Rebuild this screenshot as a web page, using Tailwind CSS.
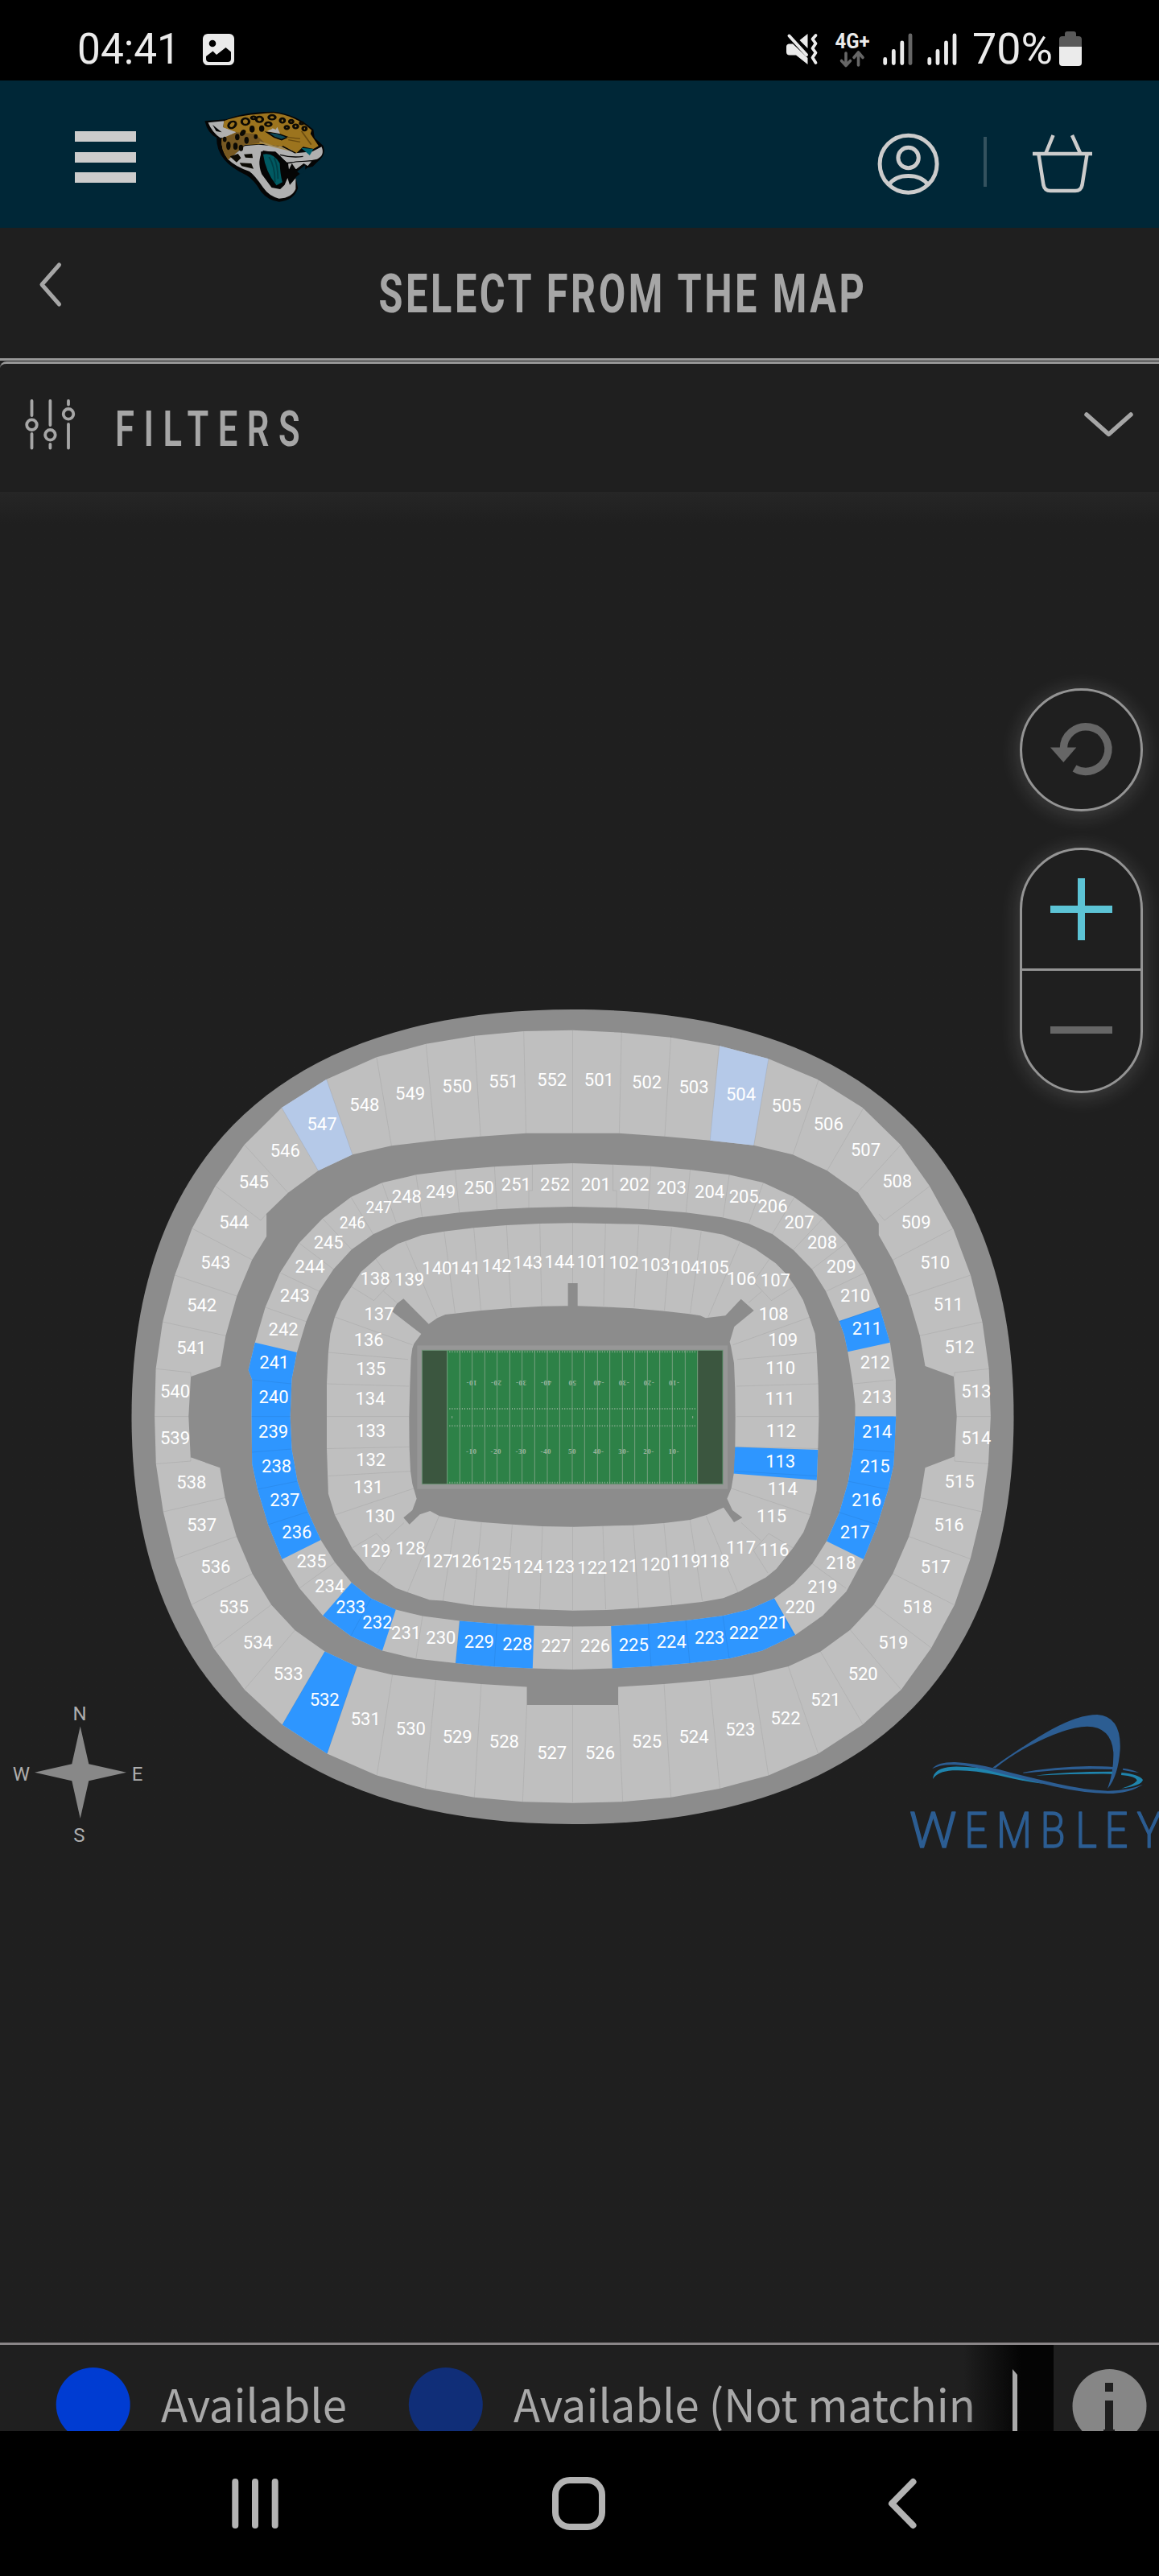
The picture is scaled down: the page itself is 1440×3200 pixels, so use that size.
<!DOCTYPE html>
<html lang="en">
<head>
  <meta charset="UTF-8">
  <title>Select from the map</title>
  <script src="https://cdn.jsdelivr.net/npm/@tailwindcss/browser@4"></script>
</head>
<body class="bg-black">

  <div class="flex h-[3200px] w-[1440px] flex-col overflow-hidden bg-[#1f1f1f] font-['Roboto',sans-serif]">

    <!-- Status bar -->
    <div class="h-[100px] shrink-0 bg-black">
      <svg class="block h-[100px] w-[1440px]" viewBox="0 0 1440 100" fill="#ebebeb">
        <text x="96" y="79" font-size="53.5" textLength="128" lengthAdjust="spacingAndGlyphs">04:41</text>

        <rect x="252" y="42" width="39" height="39" rx="6"/>
        <ellipse cx="264" cy="54" rx="4.3" ry="4.3" fill="#000"/>
        <path d="M256 72V70l8.500-6.500 4.500 4.500 11.500-9 6.500 5.500V73q0 4-4 4H260q-4 0-4-4z" fill="#000"/>

        <path d="M980 54.500h5L1003.500 72V80L989 68.500H981q-4 0-4-4V58q0-3 3-3.500zM993.500 50L1003.500 42V60z"/>
        <path d="M980.500 44.500L1002 68" stroke="#ebebeb" stroke-width="4" stroke-linecap="round"/>
        <path d="M1013.500 44l-4 4.500 4 5.500-4 6 4 5.500-4 6 4 6.500" fill="none" stroke="#ebebeb" stroke-width="3.800" stroke-linecap="round" stroke-linejoin="round"/>

        <text x="1037.500" y="60" font-size="25.500" font-weight="700" textLength="43" lengthAdjust="spacingAndGlyphs">4G+</text>
        <path d="M1051 66V81M1045.500 75.500L1051 81.500l5.500-6M1066.500 81V66M1061 71.500L1066.500 65l5.500 6.500" fill="none" stroke="#666" stroke-width="3.600" stroke-linecap="round" stroke-linejoin="round"/>

        <g stroke="#ebebeb" stroke-width="4.800" stroke-linecap="round">
          <path d="M1099.700 73.500V78.500M1110.300 63.500V78.500M1120.800 53V78.500"/>
          <path d="M1131 44V78.500" stroke="#666"/>
          <path d="M1154.800 73.500V78.500M1165 63.500V78.500M1175.500 53V78.500M1186 44V78.500"/>
        </g>

        <text x="1208" y="79" font-size="53.500" textLength="100" lengthAdjust="spacingAndGlyphs">70%</text>

        <path d="M1323 45v-3q0-3 3-3h8q3 0 3 3v3h3q4 0 4 4v9h-28v-9q0-4 4-4z" fill="#595959"/>
        <path d="M1316 58h28v20q0 4-4 4h-20q-4 0-4-4z"/>
      </svg>
    </div>

    <!-- Site header -->
    <header class="flex h-[183px] shrink-0 items-start bg-[#002737] pl-[93px] pr-[83px]">
      <div class="mt-[63px] flex w-[76px] flex-col gap-[12.500px]">
        <span class="h-[13px] bg-[#ccc]"></span>
        <span class="h-[13px] bg-[#ccc]"></span>
        <span class="h-[13px] bg-[#ccc]"></span>
      </div>

      <svg class="ml-[79px] mt-[33px] h-[123.300px] w-[160.700px]" viewBox="540 400 350 370" preserveAspectRatio="none">
        <path d="M554 452L612 446Q660 418 740 417Q800 425 848 484L851 515L874 543Q884 575 862 600L846 622L832 626L800 662L806 702Q795 748 755 753Q725 748 706 715Q688 672 668 655Q625 628 607 596Q585 560 586 514Q562 500 554 452Z" fill="#050505"/>
        <path d="M563 458L606 452L604 474L640 492L622 514L596 515Q574 495 563 458Z" fill="#b0b0b0"/>
        <path d="M575 466L600 494L585 490Z" fill="#050505"/>
        <path d="M606 452Q650 428 740 422Q800 432 843 486L840 500L862 545L848 556L820 548L800 575L760 548L716 537L662 541L618 598Q596 560 600 518L640 494L604 476Z" fill="#9c741e"/>
        <path d="M600 518L640 494L690 500L715 532L662 541L618 596Q596 558 600 518Z" fill="#765822"/>
        <path d="M618 596L662 545L700 540L760 548L800 572L845 566L870 548Q880 580 858 594L835 600L775 606L748 570L712 562Q694 600 708 650L735 700L758 706L770 690L778 664L784 690L800 665L800 705Q790 738 755 741Q728 732 712 700Q690 655 675 640Q636 622 618 596Z" fill="#b0b0b0"/>
        <path d="M706 566L745 566L776 606L777 655L755 692L737 700Q700 640 706 566Z" fill="#050505"/>
        <path d="M712 576Q740 568 757 610Q758 650 764 680L748 692Q718 640 712 576Z" fill="#005a62"/>
        <path d="M728 586Q744 620 744 680M742 590Q752 620 752 668" stroke="#003f47" stroke-width="4" fill="none"/>
        <path d="M778 610L800 604L846 600L833 622L822 612L800 635L790 614L781 640Z" fill="#b0b0b0" stroke="#050505" stroke-width="3"/>
        <path d="M804 640L826 616L826 640L812 650Z" fill="#002737"/>
        <path d="M815 552L848 556L838 580Z" fill="#00606e"/>
        <path d="M722 494L750 498L778 512L762 522L742 512Z" fill="#0c4856" stroke="#050505" stroke-width="4"/>
        <path d="M722 490L738 480L730 474L746 484L750 474L758 500Z" fill="#b0b0b0"/>
        <path d="M702 530Q740 548 790 562" stroke="#a58a50" stroke-width="6" fill="none"/>
        <path d="M758 578Q790 590 820 584M764 546L800 572" stroke="#050505" stroke-width="4" fill="none"/>
        <path d="M776 512L812 518M780 522L812 530M816 490L842 540" stroke="#6b4c10" stroke-width="4" fill="none"/>
        <g fill="none" stroke="#0c0a04" stroke-width="7">
          <ellipse cx="628" cy="466" rx="9" ry="13" transform="rotate(25 628 466)"/>
          <ellipse cx="664" cy="454" rx="10" ry="12"/>
          <ellipse cx="702" cy="446" rx="9" ry="10"/>
          <ellipse cx="686" cy="440" rx="6" ry="5"/>
          <ellipse cx="736" cy="438" rx="9" ry="8"/>
          <ellipse cx="726" cy="464" rx="8" ry="7"/>
          <ellipse cx="764" cy="450" rx="6" ry="8"/>
          <ellipse cx="788" cy="454" rx="5" ry="6"/>
          <ellipse cx="800" cy="472" rx="6" ry="7"/>
          <ellipse cx="824" cy="480" rx="5" ry="7"/>
          <ellipse cx="776" cy="476" rx="5" ry="6"/>
          <ellipse cx="816" cy="460" rx="4" ry="4"/>
        </g>
        <g fill="#0c0a04">
          <ellipse cx="657" cy="496" rx="7" ry="12" transform="rotate(20 657 496)"/>
          <ellipse cx="682" cy="482" rx="7" ry="13"/>
          <ellipse cx="708" cy="480" rx="7" ry="12"/>
          <ellipse cx="642" cy="512" rx="6" ry="12"/>
          <ellipse cx="667" cy="524" rx="6" ry="13"/>
          <ellipse cx="692" cy="510" rx="5" ry="9"/>
          <ellipse cx="618" cy="544" rx="6" ry="16"/>
          <ellipse cx="637" cy="546" rx="6" ry="13"/>
          <ellipse cx="652" cy="552" rx="6" ry="12"/>
          <ellipse cx="608" cy="520" rx="5" ry="10"/>
          <path d="M622 584L644 574L652 590L640 606ZM660 576L682 574L684 590L664 588ZM648 608L680 610L686 630L654 620Z"/>
        </g>
      </svg>

      <div class="flex-1"></div>

      <svg class="mt-[64px] h-[80px] w-[269px]" viewBox="1088 164 269 80" fill="none" stroke="#ccc" stroke-width="5">
        <circle cx="1128.600" cy="203.700" r="35.500"/>
        <circle cx="1128.600" cy="196" r="12.700"/>
        <path d="M1104.500 229.500Q1112 218.500 1128.600 218.500T1153 229.500"/>
        <path d="M1224 170V232" stroke="#34525e" stroke-width="4"/>
        <path d="M1283 191H1357" stroke-width="4.500"/>
        <path d="M1290.500 192L1296.500 230Q1298 237 1305 237H1336Q1343 237 1344.500 230L1350.500 192" stroke-width="4.500"/>
        <path d="M1308.500 168L1299.500 190M1332 168L1342 190" stroke-width="4.500"/>
      </svg>
    </header>

    <!-- Page title -->
    <div class="flex h-[162px] shrink-0 items-start pl-[48px]">
      <svg class="mt-[40px] h-[60px] w-[30px]" viewBox="48 323 30 60" fill="none" stroke="#a6a6a6" stroke-width="5" stroke-linecap="round" stroke-linejoin="round">
        <path d="M73.500 329L52 353.500L73.500 378"/>
      </svg>
      <svg class="ml-[380px] mt-[17px] h-[120px] w-[660px]" viewBox="458 300 660 120" fill="#a6a6a6">
        <text x="470.500" y="388" font-size="67.500" font-weight="700" letter-spacing="5" textLength="607" lengthAdjust="spacingAndGlyphs">SELECT FROM THE MAP</text>
      </svg>
    </div>
    <div class="h-[3px] shrink-0 bg-[#989898]"></div>

    <!-- Filters -->
    <div class="mt-px flex h-[162px] shrink-0 items-start rounded-tl-[8px] border-t-[3px] border-[#989898] pl-[28px]">
      <svg class="mt-[38px] h-[72px] w-[68px]" viewBox="28 490 68 72" fill="none" stroke="#a6a6a6" stroke-width="3.800" stroke-linecap="round">
        <path d="M39.500 498V516M39.500 539V556.500M62.400 498V528M62.400 552V556.500M85 498V502.500M85 527V556.500"/>
        <circle cx="39.500" cy="527.700" r="6.300"/>
        <circle cx="62.400" cy="540.300" r="6.300"/>
        <circle cx="85" cy="514.300" r="6.300"/>
      </svg>
      <svg class="ml-[34px] mt-[23px] h-[115px] w-[300px]" viewBox="130 475 300 115" fill="#a6a6a6">
        <text x="143" y="554" font-size="60.500" font-weight="600" letter-spacing="16" textLength="241" lengthAdjust="spacingAndGlyphs">FILTERS</text>
      </svg>
      <svg class="ml-[914px] mt-[54px] h-[40px] w-[68px]" viewBox="1344 506 68 40" fill="none" stroke="#a6a6a6" stroke-width="5.500" stroke-linecap="round" stroke-linejoin="round">
        <path d="M1350 515L1377.500 539.500L1405 515"/>
      </svg>
    </div>

    <!-- Seat map -->
    <main class="relative h-[2299px] shrink-0 bg-linear-to-b from-[#262626] to-[#1f1f1f] to-[40px]">
      <svg id="map" class="block h-[2299px] w-[1440px]" viewBox="0 611 1440 2299">
        <path fill="#8c8c8c" d="M163.500 1760C163.500 1431 355.500 1254 711.500 1254S1259.500 1431 1259.500 1760S1067.500 2266 711.500 2266S163.500 2089 163.500 1760Z"/>

        <!-- 500 level -->
        <path fill="#bfbfbf" fill-rule="evenodd" d="M711.500 1279.700L650.700 1281 589.300 1286.700 529.300 1296.700 467.900 1313.300 405.700 1340.700 350 1376 303.600 1422 267.500 1473.300 238.600 1526 217.100 1584.300 202.100 1642 193.600 1700.300 192.100 1759.600 193.800 1818.500 202.800 1878 217.100 1936.600 237.900 1993.400 265.400 2047.500 303.600 2098.800 350.700 2142.500 406.400 2178.400 468.200 2205.600 528.600 2222 589.300 2232.800 649.300 2238.300 711.500 2239.700 772.900 2238.300 833.900 2232.800 893.500 2222 954.900 2205.600 1016.700 2178.400 1071.800 2142.500 1119.900 2098.800 1156.900 2047.500 1186 1993.400 1205.700 1936.600 1219.800 1878 1228 1818.500 1230.900 1759.600 1228.700 1700.300 1220.500 1642 1206 1584.300 1184.600 1527 1155 1473.300 1118.800 1422 1071.800 1376 1015.600 1340.700 954.900 1315.300 894.200 1299.300 833.600 1288.700 772.500 1282.700Z
          M711.500 1407.700L768.800 1407.700 825.800 1411.700 882 1416.700 936.400 1422.700 984.900 1434.300 1027.800 1454.300 1066.300 1481.700 1091.800 1520 1091.800 1534.300 1109.500 1565.700 1128.400 1610.300 1142.800 1659 1149.500 1697 1185 1710 1188.700 1759.600 1186.100 1809.200 1149.500 1823.300 1143.600 1859.800 1129.200 1909 1109.200 1954.900 1085.500 1993.400 1056.600 2024.400 1019.600 2051.600 979.700 2069.900 934.600 2080.600 881.300 2087.100 824.700 2091.900 768.100 2095.400 768.100 2118.100 654.600 2118.100 654.600 2095.400 597.900 2091.900 541.400 2087.100 487.500 2080.600 443.600 2070.200 403.600 2051.600 366.400 2025.100 337.100 1993.400 313.600 1954.900 293.900 1908.700 279.600 1860.500 273.200 1823.300 236.800 1810.200 234.300 1759.600 237.100 1710 273.900 1697.300 280.400 1659.300 294.300 1610 313.200 1565 331.100 1536 331.100 1507.700 357.900 1481.700 395.400 1454.300 437.900 1434.300 486.400 1423.300 540.700 1416.700 597.100 1411.700 653.600 1407.700Z"/>

        <!-- 200 level -->
        <path fill="#bfbfbf" fill-rule="evenodd" d="M711.500 1445L661.400 1446.700 614.300 1449.300 565.400 1453.300 516.800 1459.300 474.600 1469.300 436.100 1487 400.700 1513.700 371.400 1544.300 347.900 1581 329.600 1624 316.800 1667.700 308.600 1702 313.200 1714 312.500 1759.600 313.200 1818.500 320 1850.200 333.200 1894.300 350.400 1937 372.100 1973.100 401.100 2006.900 436.100 2032.400 475 2050.600 516.800 2060.600 566.100 2066.100 614.300 2070.600 661.800 2072.600 711.500 2074 760.700 2072.600 808.800 2069.900 856.900 2066.100 906.400 2060.200 947.100 2050.600 988.200 2031 1021.900 2007.200 1051.500 1976.900 1072.900 1937 1089.900 1895 1103.600 1850.200 1110.300 1819.900 1113.200 1759.600 1112.900 1714 1105.800 1667.700 1092.900 1624 1074.800 1581.700 1051.500 1543.700 1021.900 1512.700 986.300 1486.700 947.900 1469 905.700 1459.300 856.500 1453 808.400 1448.700 760.300 1446.700Z
          M711.500 1499L765.500 1500.300 804.300 1502.300 852.400 1506.300 897.200 1512.300 930.100 1520 960 1533.300 986 1553 1008.900 1576.700 1025.900 1603.700 1042.600 1641 1048.900 1658.300 1053.300 1679.300 1059.600 1718.700 1062.500 1745 1062.500 1759.600 1060.300 1801 1054 1839.900 1043 1878.400 1027 1914.600 1009.300 1942.500 986 1967.300 961.900 1985.500 930.100 1999.600 897.600 2007.200 852.400 2013 804.300 2017.200 759.200 2020 711.500 2020.600 663.600 2019.600 617.500 2017.200 571 2013.400 525 2007.600 491.800 1999.600 461 1985.500 436.800 1965.900 416.100 1940.800 398.600 1912.900 382.500 1877.700 369.600 1839.900 362.500 1800.300 360.700 1759.600 362.500 1713.300 368.900 1680 380.400 1641.700 396.400 1604 414.300 1576.700 436.800 1552.300 463.600 1533.300 492.900 1520 520 1512.500 570.700 1506.300 617.500 1502.300 657 1500.300Z"/>

        <!-- 100 level -->
        <path fill="#bfbfbf" d="M711.500 1519.300L670.700 1520 629.300 1522 588.600 1525.300 551.800 1529.700 524.300 1534.300 494.600 1545 473.200 1558.300 448.600 1580 436.800 1598.300 424.300 1616.700 416 1636 410.400 1656.700 407.900 1680 406 1719.300 406 1799.200 407.900 1855.400 416 1881.900 437.500 1923.200 458.600 1949 492.100 1972.800 533.900 1987.600 550.400 1988.600 588.200 1994.500 629.300 1997.600 670.400 1999.300 711.500 2000.700 753.300 2000 794.700 1997.600 835.800 1994.100 872 1990 898.700 1985.200 919 1976.900 951.600 1959.400 964.500 1949 985.200 1922.900 998.200 1903.600 1006.700 1882.200 1014.500 1851.900 1016.300 1800.600 1017.400 1759.600 1016.700 1720 1014.800 1680 1012.600 1656.700 1005.600 1636 997.800 1615 988.600 1599.300 977.500 1583.300 963.800 1569.300 938.600 1551.700 919 1542 898.700 1533.700 871.300 1528.700 836 1523.700 792.500 1520.700 752.500 1520Z"/>

        <!-- Matching blocks -->
        <g fill="#2e96ff">
          <path d="M316.800 1667.700L368.900 1680 362.500 1713.300 360.700 1759.600 362.500 1800.300 369.600 1839.900 382.500 1877.700 398.600 1912.900 350.400 1937 333.200 1894.300 320 1850.200 313.200 1818.500 312.500 1759.600 313.200 1714 308.600 1702Z"/>
          <path d="M401.100 2006.900L436.800 1965.900 461 1985.500 491.800 1999.600 475 2050.600 436.100 2032.400Z"/>
          <path d="M571 2013.400L617.500 2017.200 663.600 2019.600 661.800 2072.600 614.300 2070.600 566.100 2066.100Z"/>
          <path d="M759.200 2020L804.300 2017.200 852.400 2013 897.600 2007.200 930.100 1999.600 961.900 1985.500 988.200 2031 947.100 2050.600 906.400 2060.200 856.900 2066.100 808.800 2069.900 760.700 2072.600Z"/>
          <path d="M1062.500 1759.600L1113.200 1759.600 1111.400 1801 1110.300 1819.900 1103.600 1850.200 1089.900 1895 1072.900 1937 1027 1914.600 1043 1878.400 1054 1839.900 1060.300 1801Z"/>
          <path d="M1042.600 1641L1092.900 1624 1105.800 1667.700 1053.300 1679.300 1048.900 1658.300Z"/>
          <path d="M913 1797.500L1016.300 1801 1014.800 1838.800 911 1830.600Z"/>
          <path d="M403.600 2051.600L443.600 2070.200 406.400 2178.400 350.700 2142.500Z"/>
        </g>
        <g fill="#b5c9e8">
          <path d="M405.700 1340.700L437.900 1434.300 395.400 1454.300 350 1376Z"/>
          <path d="M894.200 1299.300L954.900 1315.300 936.400 1422.700 882 1416.700Z"/>
        </g>

        <!-- Block edges, left half then mirrored -->
        <g fill="none" stroke="#000" stroke-opacity=".065" stroke-width="1">
          <path id="edges" d="M650.700 1281L653.600 1407.700M589.300 1286.700L597.100 1411.700M529.300 1296.700L540.700 1416.700M467.900 1313.300L486.400 1423.300M405.700 1340.700L437.900 1434.300M350 1376L395.400 1454.300M303.600 1422L357.900 1481.700M267.500 1473.300L324 1516 331 1508M238.600 1526L313.200 1565M217 1584L294.300 1610M202 1642L280.400 1659.300M193.600 1700.300L237 1705V1710M192 1759.600H234.300M193.800 1818.500L237 1815V1810M202.800 1878L279.600 1860.500M217.100 1936.600L293.900 1908.700M237.900 1993.400L313.600 1954.900M265.400 2047.500L337.100 1993.400M303.600 2098.800L366.400 2025.100M350.700 2142.500L403.600 2051.600M406.400 2178.400L443.600 2070.200M468.200 2205.600L487.500 2080.600M528.600 2222L541.400 2087.100M589.300 2232.800L597.900 2091.900M649.300 2238.300L654.600 2118
            M661.400 1446.700V1479H657V1500M614.300 1449L617.500 1502M565.400 1453L570.700 1506M516.800 1459L524.600 1511.700M474.600 1469L492 1518M436 1487L463.600 1533M400.700 1513.700L436.800 1552M371.400 1544L414.300 1576.700M347.900 1581L396.400 1604M329.600 1624L380.400 1641.700M313 1714L362 1719M312.500 1759.600H361M313 1804L362.500 1800M320 1850L369.600 1840M333 1894L382.500 1878M372 1973L416 1941M436 2032L461 1985.500M516.800 2060.600L525 2007.600M566 2066L571 2013.400M614 2070.600L617.500 2017
            M670.700 1520L673 1622M629.300 1522L635 1624M588.600 1525L597.500 1627.700M551.800 1529.700L565.400 1631M503.900 1543L542.900 1635.700M467 1564L486.800 1592 464.600 1615.600 437 1598.600M476.400 1604L493 1618.300M416 1636L512.500 1670.700M407.900 1680L507 1688.700M406 1719L508 1722M406 1759.600H508M406 1799.500L508 1797.500M407.900 1833.500L510 1827.600M416 1881.900L514 1849M437.500 1923L467.900 1905 486.800 1926 469 1954M477.500 1914L502 1891.500M545.700 1882.900L506.400 1977.600M565.700 1888L550.400 1988.600M598.200 1891.500L588.200 1994.500M636.400 1894.300L629.300 1997.600M674 1896L670.400 1999.300"/>
          <use href="#edges" transform="translate(1423) scale(-1 1)"/>
          <path d="M711.500 1280V1407M711.500 1445V1499M711.500 1519V1594M711.500 1896V2000M711.500 2020V2074M711.500 2118V2239"/>
        </g>

        <!-- Pitch -->
        <g transform="translate(480 1580) scale(.33333)">
          <path fill="#8c8c8c" d="M677 42H713V127L830 131 920 136 1037 146 1130 157 1170 163 1190 172 1264 163 1322 101 1370 144 1297 204 1280 261 1284 275 1296 340 1300 440 1301 540 1300 655 1295 752 1286 806 1270 845 1290 888 1327 916 1296 933 1257 878 1195 905 1133 924 1035 936 920 944 700 950 580 948 470 941 350 932 255 921 198 910 163 891 125 904 86 941 64 916 97 888 113 845 97 790 90 742 86 655 85 540 88 425 92 320 97 285 103 268 130 231 22 148 40 118 64 100 158 194 190 172 220 159 255 155 353 144 465 135 580 128 677 127Z"/>
          <rect x="115" y="274" width="1157" height="535" fill="#979797"/>
          <rect x="133" y="292" width="1121" height="499" fill="#2d8147" stroke="#6f8f76" stroke-width="3"/>
          <path d="M135 294H227V789H135ZM1160 294H1252V789H1160Z" fill="#3b563f"/>
          <path d="M227 292V791M274 292V791M320 292V791M367 292V791M413 292V791M460 292V791M506 292V791M553 292V791M600 292V791M646 292V791M693 292V791M739 292V791M787 292V791M833 292V791M880 292V791M926 292V791M973 292V791M1019 292V791M1066 292V791M1114 292V791M1160 292V791" stroke="#76a080" stroke-width="3"/>
          <path d="M235 298H1154M235 510H1154M235 573.500H1154M235 785H1154" stroke="#8fae95" stroke-width="6" stroke-dasharray="3 6.320"/>
          <path d="M245 537V546M1142 537V546" stroke="#8fae95" stroke-width="3"/>
          <g id="yards" fill="#9db5a1" font-family="Liberation Serif, serif" font-weight="700" font-size="27" text-anchor="middle"></g>
        </g>

        <g id="labels" fill="#fff" font-size="22" text-anchor="middle"></g>

        <!-- Compass -->
        <path fill="#888" d="M99.700 2144.500L110.300 2191.300 157 2201.700 110.300 2212.300 99.700 2259 89.300 2212.300 43 2201.700 89.300 2191.300Z"/>
        <g fill="#adadad" font-size="24" text-anchor="middle">
          <text x="99" y="2137.300">N</text>
          <text x="26.500" y="2212">W</text>
          <text x="170.500" y="2212">E</text>
          <text x="98.300" y="2288">S</text>
        </g>

        <!-- Venue logo -->
        <g transform="translate(1110 2110) scale(.33333)">
          <path fill="#2c5d92" d="M370 257Q500 165 590 115Q690 60 760 60Q850 66 845 190Q838 290 798 337Q822 270 820 200Q812 105 722 104Q640 106 500 180Q430 218 381 259Z"/>
          <path fill="#2c5d92" d="M484 275Q600 254 730 252Q780 252 820 255V264Q700 260 600 268Q540 274 484 278ZM856 260Q890 264 915 276Q888 273 855 266Z"/>
          <path fill="#1f84ad" d="M530 287Q640 272 816 272V281Q680 280 530 287ZM850 276Q915 282 930 303Q925 325 850 335Q895 322 908 306Q905 290 849 285Z"/>
          <path fill="#1f84ad" d="M147 300Q150 258 220 254Q300 252 400 272L560 318Q480 308 390 286Q290 264 220 268Q165 272 147 300Z"/>
          <path fill="#2c5d92" d="M144 262Q165 236 230 237Q300 240 390 263Q480 288 600 315Q720 342 800 344Q880 342 930 320Q880 354 800 354Q710 353 600 328Q480 300 400 280Q290 250 230 247Q175 244 144 262Z"/>
          <g font-size="186" font-weight="300" fill="#2c5d92" stroke="#2c5d92" stroke-width="4" stroke-linejoin="round">
            <text transform="scale(1.06 1)" x="56" y="556">W</text>
            <text transform="scale(.82 1)" x="323 468 668 828 960 1107" y="556">EMBLEY</text>
          </g>
        </g>
      </svg>

      <!-- Zoom controls -->
      <div class="absolute right-5 top-[244px] flex w-[153px] flex-col gap-[45px]">
        <button class="h-[153px] rounded-full border-[3px] border-[#949494] bg-[#1f1f1f] shadow-[0_3px_24px_3px_rgba(255,255,255,0.14)]">
          <svg class="h-[147px] w-[147px]" viewBox="1270 858 147 147">
            <path d="M1321.300 930.400A27.800 27.800 0 1 1 1335 954.500" fill="none" stroke="#666" stroke-width="9.400"/>
            <path d="M1305 928.600H1337.300L1321.300 947Z" fill="#666"/>
          </svg>
        </button>
        <div class="flex h-[305px] flex-col rounded-[77px] border-[3px] border-[#949494] bg-[#1f1f1f] shadow-[0_3px_24px_3px_rgba(255,255,255,0.14)]">
          <button class="flex h-[150px] items-center justify-center border-b-[3px] border-[#949494] pb-px">
            <svg class="h-[77px] w-[77px]" viewBox="0 0 77 77" stroke="#5cc3d5" stroke-width="9"><path d="M0 38.500H77M38.500 0V77"/></svg>
          </button>
          <button class="flex flex-1 items-center justify-center pb-[3px]">
            <svg class="h-[9px] w-[77px]" viewBox="0 0 77 9"><path d="M0 0H77V9H0Z" fill="#666"/></svg>
          </button>
        </div>
      </div>
    </main>

    <!-- Legend -->
    <footer class="relative flex h-[110px] shrink-0 items-start overflow-hidden border-t-[3px] border-[#8a8688] text-[56px] leading-none text-[#a9a9a9] font-['Noto_Sans_CJK_SC','Noto_Sans',sans-serif]">
      <svg class="block h-[107px] w-[1440px]" viewBox="0 2913 1440 107" fill="#a9a9a9">
        <defs>
          <linearGradient id="fade">
            <stop offset="0" stop-color="#040404" stop-opacity="0"/>
            <stop offset=".64" stop-color="#040404"/>
          </linearGradient>
        </defs>
        <circle cx="115.700" cy="2987" r="46" fill="#003cd2"/>
        <text x="200" y="3009" textLength="231" lengthAdjust="spacingAndGlyphs">Available</text>
        <circle cx="553.800" cy="2987" r="46" fill="#102e78"/>
        <text x="638" y="3009" textLength="574" lengthAdjust="spacingAndGlyphs">Available (Not matchin</text>
        <rect x="1197" y="2913" width="112" height="107" fill="url(#fade)"/>
        <path d="M1258 2943L1264 2950V3020H1258Z"/>
        <circle cx="1378.500" cy="2989" r="46" fill="#868686"/>
        <path d="M1373 2960H1383V2971H1373ZM1373 2982H1383V3018H1385V3020H1371V3018H1373Z" fill="#1f1f1f"/>
      </svg>
    </footer>

    <!-- System navigation -->
    <nav class="h-[180px] shrink-0 bg-black">
      <svg class="block h-[180px] w-[1440px]" viewBox="0 3020 1440 180" fill="none" stroke="#b3b3b3" stroke-width="8" stroke-linecap="round" stroke-linejoin="round">
        <path d="M292.300 3083V3137M317 3083V3137M341.700 3083V3137"/>
        <rect x="690" y="3081" width="58" height="58" rx="18"/>
        <path d="M1134.500 3083L1108 3110L1134.500 3137"/>
      </svg>
    </nav>
  </div>

  <script>
    const NS = 'http://www.w3.org/2000/svg';

    function addText(parent, txt, x, y, attrs = {}) {
      const el = document.createElementNS(NS, 'text');
      el.setAttribute('x', x);
      el.setAttribute('y', y);
      for (const k in attrs) el.setAttribute(k, attrs[k]);
      el.textContent = txt;
      parent.appendChild(el);
    }

    // block number, centre x, centre y
    const blocks = [
      [501,744.4,1341.3],[502,803.6,1344.3],[503,862,1350],[504,920.5,1359.3],[505,977.1,1373],[506,1029.3,1396.3],
      [507,1075.5,1428.3],[508,1114.7,1467.3],[509,1138,1518.3],[510,1161.7,1568.3],[511,1178.4,1620],[512,1192,1673.3],
      [513,1212.8,1728],[514,1212.8,1786.1],[515,1192,1840.2],[516,1179.1,1893.6],[517,1162.4,1946.3],[518,1139.9,1996.2],
      [519,1109.9,2040.3],[520,1072.2,2079.2],[521,1025.9,2111.2],[522,976,2134.3],[523,919.8,2148.4],[524,862,2157.4],
      [525,803.6,2162.9],[526,745.5,2176.6],[527,685.7,2177.3],[528,626.4,2162.9],[529,568.2,2157.4],[530,510.4,2147.4],
      [531,454.3,2135.3],[532,403.2,2111.2],[533,358.2,2079.2],[534,320.4,2040.3],[535,290.4,1996.2],[536,267.9,1946.3],
      [537,250.7,1894.3],[538,237.9,1841.2],[539,217.5,1786.1],[540,217.5,1728],[541,237.9,1674.3],[542,250.7,1621.3],
      [543,267.9,1568.3],[544,290.7,1518.3],[545,315.4,1468],[546,354.3,1429.3],[547,400,1396.3],[548,452.9,1372.3],
      [549,509.6,1358.3],[550,567.9,1349.3],[551,625.7,1343.3],[552,685.7,1340.7],
      [201,740.3,1471.3],[202,788,1471.3],[203,834.3,1475.3],[204,881.6,1480.3],[205,924.2,1486.3],[206,960,1498.3],
      [207,993,1518.3],[208,1021.5,1543.3],[209,1045.2,1573.3],[210,1062.6,1609.3],[211,1077.4,1650.3],[212,1087.3,1691.7],
      [213,1089.6,1735],[214,1089.6,1778.2],[215,1087,1821.3],[216,1076.6,1863.3],[217,1062.2,1903.2],[218,1044.8,1941.1],
      [219,1021.9,1971.1],[220,994.1,1996.2],[221,960.5,2015.5],[222,924.2,2028.2],[223,881.6,2034.1],[224,834.3,2039.2],
      [225,787.3,2043.4],[226,739.6,2044.4],[227,690.7,2044.4],[228,642.9,2042],[229,595.4,2039.2],[230,547.9,2034.1],
      [231,504.6,2028.2],[232,468.9,2015.5],[233,435.7,1996.2],[234,409.6,1970.4],[235,387.1,1939],[236,368.9,1903.2],
      [237,353.9,1863.3],[238,343.6,1821.3],[239,339.6,1778.2],[240,340,1735.3],[241,340.7,1692.3],[242,352.1,1650.7],
      [243,366.4,1609.3],[244,385,1573.3],[245,408.2,1543.3],[246,437.9,1518.7,19.3],[247,470.7,1500,19.3],[248,505.4,1486.3],
      [249,547.5,1480.3],[250,595.4,1475.3],[251,641.4,1471.3],[252,689.6,1470.7],
      [101,735,1566.7],[102,775,1568.3],[103,814.3,1570.7],[104,851.7,1574.3],[105,887.2,1573.7],[106,921.2,1588.3],
      [107,963.4,1590.3],[108,961.2,1632.3],[109,972.7,1664.3],[110,969.7,1699.3],[111,969,1737],[112,970.4,1777.5],
      [113,969.7,1815.4],[114,972.3,1849.2],[115,958.6,1882.6],[116,961.9,1925.3],[117,920.5,1922.2],[118,887.9,1939.4],
      [119,852,1939.4],[120,814.3,1943.2],[121,774.7,1945.2],[122,735.9,1947.3],[123,695.7,1946.3],[124,656.4,1945.6],
      [125,617.1,1942.1],[126,579.6,1939.4],[127,544.3,1939.4],[128,510,1923.2],[129,466.8,1926],[130,472,1883.3],
      [131,457.5,1847],[132,460.7,1812.7],[133,460.7,1777.5],[134,460,1737],[135,460.7,1700.3],[136,458.2,1664.3],
      [137,471,1632.3],[138,466,1588.3],[139,508.6,1589.3],[140,542.9,1575],[141,578.9,1575],[142,617.1,1571.7],
      [143,655.7,1568.3],[144,695,1566.7]
    ];
    const labels = document.getElementById('labels');
    blocks.forEach(([n, x, y, size]) => {
      addText(labels, n, x, y + (size ? 6.9 : 7.9), size ? { 'font-size': size } : {});
    });

    // yard numbers, the far side faces the other way
    const yards = document.getElementById('yards');
    const near = ['-10', '-20', '-30', '-40', '50', '40-', '30-', '20-', '10-'];
    const far = ['10-', '20-', '30-', '40-', '50', '-40', '-30', '-20', '-10'];
    const posX = [317, 409, 502, 595, 693, 791, 885, 978, 1072];
    posX.forEach((x, i) => {
      addText(yards, near[i], x, 677, { 'letter-spacing': 1.5 });
      addText(yards, far[i], x, 405, { 'letter-spacing': 1.5, transform: `rotate(180 ${x} 405)` });
    });
  </script>
</body>
</html>
